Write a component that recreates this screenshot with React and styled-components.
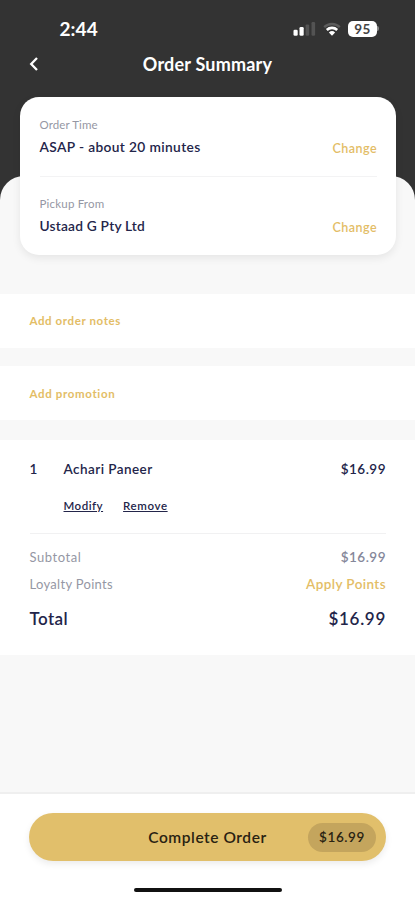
import React from 'react'
import styled, { createGlobalStyle } from 'styled-components'

const gold = '#e3bd66'
const navy = '#23254a'
const grey = '#9597a4'

const App = () => {
  return (
    <Screen>
      <GlobalStyle />
      <StatusBar>
        <Text $size={19} $weight={700} $color='#fff' $spacing={0.1}>
          2:44
        </Text>
        <StatusIcons>
          <SignalIcon />
          <WifiIcon />
          <BatteryIcon />
        </StatusIcons>
      </StatusBar>
      <NavBar>
        <BackButton aria-label='Back'>
          <svg width='10' height='16' viewBox='0 0 10 16' fill='none'>
            <path d='M8 2 2.2 8 8 14' stroke='#fff' strokeWidth='2.3' />
          </svg>
        </BackButton>
        <Text as='h1' $size={18} $weight={700} $color='#fff' $spacing={0.2}>
          Order Summary
        </Text>
      </NavBar>
      <Sheet>
        <Card>
          <CardRow>
            <CardInfo>
              <Text $size={11.5} $color={grey} $spacing={0.1}>
                Order Time
              </Text>
              <Text $size={13.75} $weight={600} $spacing={0.36}>
                ASAP - about 20 minutes
              </Text>
            </CardInfo>
            <Change>Change</Change>
          </CardRow>
          <CardRow>
            <CardInfo>
              <Text $size={11.5} $color={grey} $spacing={0.2}>
                Pickup From
              </Text>
              <Text $size={13.75} $weight={600} $spacing={0.2}>
                Ustaad G Pty Ltd
              </Text>
            </CardInfo>
            <Change>Change</Change>
          </CardRow>
        </Card>
        <Sections>
          <ActionRow>
            <Text $size={11.5} $weight={700} $color={gold} $spacing={0.6}>
              Add order notes
            </Text>
          </ActionRow>
          <ActionRow $offset={1}>
            <Text $size={11.5} $weight={700} $color={gold} $spacing={0.65}>
              Add promotion
            </Text>
          </ActionRow>
        </Sections>
        <Order>
          <Item>
            <Text $size={13.5} $weight={600}>
              1
            </Text>
            <Text $size={13.5} $weight={600} $spacing={0.45}>
              Achari Paneer
            </Text>
            <Text $size={13.5} $weight={600} $spacing={0.5}>
              $16.99
            </Text>
          </Item>
          <ItemLinks>
            <Underlined $size={11.5} $weight={600} $spacing={0.5}>
              Modify
            </Underlined>
            <Underlined $size={11.5} $weight={600} $spacing={0.6}>
              Remove
            </Underlined>
          </ItemLinks>
          <Line $height={27}>
            <Text $size={13} $color={grey} $spacing={0.55}>
              Subtotal
            </Text>
            <Text $size={13.5} $weight={600} $color='#85879a' $spacing={0.5}>
              $16.99
            </Text>
          </Line>
          <Line $height={28}>
            <Text $size={13} $color={grey} $spacing={0.3}>
              Loyalty Points
            </Text>
            <Text $size={13.5} $weight={600} $color={gold} $spacing={0.4}>
              Apply Points
            </Text>
          </Line>
          <Line $height={41}>
            <Text $size={17} $weight={600} $spacing={0.4}>
              Total
            </Text>
            <Text $size={17} $weight={600} $spacing={0.7}>
              $16.99
            </Text>
          </Line>
        </Order>
      </Sheet>
      <Footer>
        <CompleteButton>
          <span />
          <Text $size={15.5} $weight={600} $color='#292212' $spacing={0.55}>
            Complete Order
          </Text>
          <Price>
            <Text $size={13.5} $weight={600} $color='#292212' $spacing={0.6}>
              $16.99
            </Text>
          </Price>
        </CompleteButton>
        <HomeIndicator />
      </Footer>
    </Screen>
  )
}

const SignalIcon = () => (
  <svg width='23' height='16' viewBox='0 0 23 16'>
    <rect x='0.5' y='8.8' width='4.2' height='6' rx='1.3' fill='#fff' />
    <rect x='6.5' y='6' width='4.2' height='8.8' rx='1.3' fill='#fff' />
    <rect x='12.6' y='3.4' width='3.6' height='11.4' rx='1.2' fill='#535353' />
    <rect x='18.5' y='1' width='3.6' height='13.8' rx='1.2' fill='#535353' />
  </svg>
)

const WifiIcon = () => (
  <svg width='18' height='14' viewBox='0 0 18 14' fill='none'>
    <path d='M1.2 5.2a11.2 11.2 0 0 1 15.6 0' stroke='#5c5c5c' strokeWidth='2.4' />
    <path d='M3.8 8a7.5 7.5 0 0 1 10.4 0' stroke='#fff' strokeWidth='2.6' />
    <path d='M9 13.7 5.9 10.5a4.5 4.5 0 0 1 6.2 0z' fill='#fff' />
  </svg>
)

const BatteryIcon = () => (
  <Battery>
    <Text $size={13.5} $weight={700} $color='#444' $spacing={0.4}>
      95
    </Text>
  </Battery>
)

export default App

//styles

const GlobalStyle = createGlobalStyle`
  * {
    box-sizing: border-box;
  }
  body {
    margin: 0;
    font-family: Lato, 'Open Sans', sans-serif;
  }
`
const Screen = styled.div`
  display: flex;
  flex-direction: column;
  width: 100%;
  height: 900px;
  overflow: hidden;
  background-color: #333;
`
const Text = styled.span`
  margin: 0;
  font-size: ${p => p.$size}px;
  font-weight: ${p => p.$weight || 400};
  color: ${p => p.$color || navy};
  letter-spacing: ${p => p.$spacing || 0}px;
  line-height: 20px;
  white-space: nowrap;
`
const Underlined = styled(Text)`
  text-decoration: underline;
  text-underline-offset: 1px;
`
const Change = styled.a`
  font-size: 12.5px;
  font-weight: 600;
  color: ${gold};
  letter-spacing: 0.45px;
  line-height: 20px;
`
const StatusBar = styled.div`
  display: flex;
  flex: none;
  align-items: center;
  justify-content: space-between;
  height: 44px;
  padding: 13px 36px 0 59.5px;
`
const StatusIcons = styled.div`
  display: flex;
  align-items: center;
  gap: 7px;
`
const Battery = styled.div`
  display: flex;
  align-items: center;
  justify-content: center;
  width: 29px;
  height: 16px;
  border-radius: 5px;
  background-color: #fff;
  margin-right: 2px;
  &::after {
    content: '';
    width: 2px;
    height: 5px;
    margin-right: -8px;
    margin-left: 6px;
    border-radius: 0 2px 2px 0;
    background-color: #888;
  }
`
const NavBar = styled.header`
  display: grid;
  grid-template-columns: 40px 1fr 40px;
  flex: none;
  align-items: center;
  height: 53px;
  padding: 0 14px 13px;
  text-align: center;
`
const BackButton = styled.button`
  display: flex;
  align-items: center;
  justify-content: center;
  padding: 0;
  border: none;
  background: none;
`
const Sheet = styled.main`
  display: flex;
  flex: 1;
  flex-direction: column;
  margin-top: 79px;
  border-radius: 24px 24px 0 0;
  background-color: #f8f8f8;
`
const Card = styled.section`
  flex: none;
  height: 158px;
  margin: -79px 19px 0 20px;
  padding: 0 19px 0 19.5px;
  border-radius: 19px;
  background-color: #fff;
  box-shadow: 0 3px 8px rgba(0, 0, 0, 0.08);
`
const CardRow = styled.div`
  display: flex;
  align-items: flex-end;
  justify-content: space-between;
  height: 79px;
  padding-bottom: 17px;
  & + & {
    border-top: 1px solid #f3f3f4;
  }
`
const CardInfo = styled.div`
  display: flex;
  flex-direction: column;
  gap: 2px;
  padding-bottom: 2px;
`
const Sections = styled.div`
  display: flex;
  flex: none;
  flex-direction: column;
  gap: 18px;
  padding: 39px 0 20px;
`
const ActionRow = styled.div`
  display: flex;
  align-items: center;
  height: 54px;
  padding: ${p => (p.$offset || 0) * 2}px 0 0 29.5px;
  background-color: #fff;
`
const Order = styled.section`
  flex: none;
  height: 215px;
  padding: 19px 29px 0 29.5px;
  background-color: #fff;
`
const Item = styled.div`
  display: grid;
  grid-template-columns: 34px 1fr auto;
`
const ItemLinks = styled.div`
  display: flex;
  gap: 20px;
  height: 55px;
  padding: 17px 0 0 34px;
  border-bottom: 1px solid #f1f1f2;
  margin-bottom: 9px;
`
const Line = styled.div`
  display: flex;
  align-items: center;
  justify-content: space-between;
  height: ${p => p.$height}px;
`
const Footer = styled.footer`
  display: flex;
  flex: none;
  flex-direction: column;
  align-items: center;
  gap: 27px;
  height: 108px;
  padding: 19px 29px 0;
  border-top: 2px solid #efefef;
  background-color: #fff;
`
const CompleteButton = styled.button`
  display: grid;
  grid-template-columns: 1fr auto 1fr;
  align-items: center;
  width: 100%;
  height: 48px;
  padding: 0 10px;
  border: none;
  border-radius: 24px;
  background-color: #e1bf6b;
  box-shadow: 0 3px 7px rgba(0, 0, 0, 0.08);
  font-family: inherit;
`
const Price = styled.div`
  display: flex;
  align-items: center;
  justify-content: center;
  justify-self: end;
  width: 68px;
  height: 29px;
  border-radius: 15px;
  background-color: #c4a55d;
`
const HomeIndicator = styled.div`
  width: 148px;
  height: 4px;
  border-radius: 2px;
  background-color: #111;
`
